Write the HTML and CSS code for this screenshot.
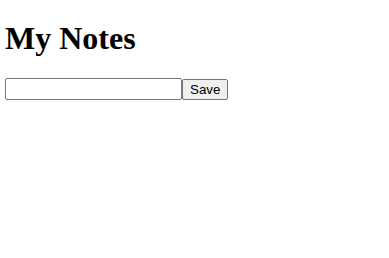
FILE: index.html
```html
<!DOCTYPE html>
<html>
<head>
<meta charset="utf-8">
<title>My Notes</title>
<link rel="stylesheet" href="styles.css">
</head>
<body>
<h1 class="title">My Notes</h1>
<form class="note-form">
<input type="text" class="note-input"><button type="button" class="save-btn">Save</button>
</form>
</body>
</html>
```

FILE: styles.css
```css
html, body {
  background: #fff;
}
body {
  margin: 0;
  padding: 0 5px;
  font-family: "Liberation Serif", "Times New Roman", serif;
}
.title {
  font-family: "Liberation Serif", "Times New Roman", serif;
  font-size: 32px;
  font-weight: bold;
  margin: 20px 0 21px;
  color: #000;
}
.note-form {
  display: flex;
  align-items: flex-start;
  margin: 0;
}
.note-input {
  box-sizing: border-box;
  width: 177px;
  height: 22px;
  margin: 0;
  padding: 1px 2px;
  border: 1px solid #767676;
  border-radius: 2px;
  font-family: "Liberation Sans", Arial, sans-serif;
  font-size: 13.33px;
  background: #fff;
}
.save-btn {
  box-sizing: border-box;
  height: 21px;
  margin: 1px 0 0;
  padding: 1px 7px;
  border: 1px solid #767676;
  border-radius: 2px;
  background: #efefef;
  color: #000;
  font-family: "Liberation Sans", Arial, sans-serif;
  font-size: 13.33px;
}
```
